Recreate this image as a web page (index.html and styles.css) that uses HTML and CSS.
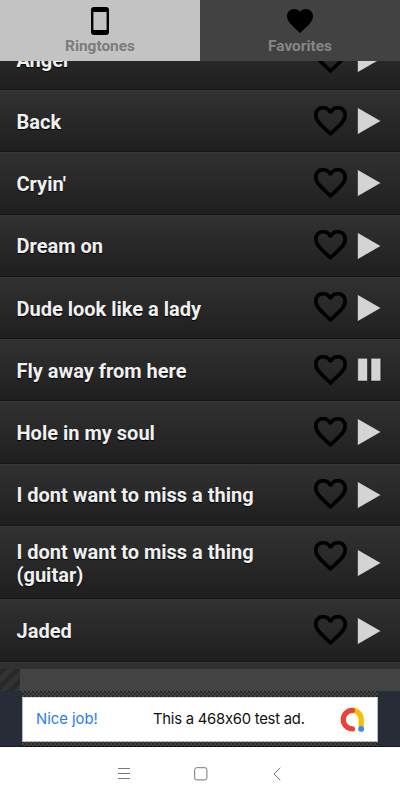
FILE: index.html
```html
<!DOCTYPE html>
<html lang="en">
<head>
<meta charset="utf-8">
<title>Ringtones</title>
<link rel="stylesheet" href="styles.css">
</head>
<body>
<svg class="defs" aria-hidden="true">
  <symbol id="heart" viewBox="2 3 20 18.35"><path d="M16.5 3c-1.74 0-3.41.81-4.5 2.09C10.91 3.81 9.24 3 7.5 3 4.42 3 2 5.42 2 8.5c0 3.78 3.4 6.86 8.55 11.54L12 21.35l1.45-1.32C18.6 15.36 22 12.28 22 8.5 22 5.42 19.58 3 16.5 3zm-4.4 15.55l-.1.1-.1-.1C7.14 14.24 4 11.39 4 8.5 4 6.5 5.5 5 7.5 5c1.54 0 3.04.99 3.57 2.36h1.87C13.46 5.99 14.96 5 16.5 5c2 0 3.5 1.5 3.5 3.5 0 2.89-3.14 5.74-7.9 10.05z"/></symbol>
  <symbol id="play" viewBox="0 0 26 30"><path d="M1.5 1.4V28.6L25 15z"/></symbol>
  <symbol id="pause" viewBox="0 0 26 30"><path d="M1.7 3.2h9.8v22.8H1.7zM15 3.2h9.8v22.8H15z"/></symbol>
</svg>
<div class="app">
  <nav class="tabs">
    <div class="tab active">
      <svg class="phone" viewBox="0 0 18 28"><path fill-rule="evenodd" d="M3 0h12a3 3 0 0 1 3 3v22a3 3 0 0 1-3 3H3a3 3 0 0 1-3-3V3a3 3 0 0 1 3-3zM2.4 5v18h13.2V5z"/></svg>
      <span>Ringtones</span>
    </div>
    <div class="tab">
      <svg class="fav" viewBox="2 3 20 18.35"><path d="M12 21.35l-1.45-1.32C5.4 15.36 2 12.28 2 8.5 2 5.42 4.42 3 7.5 3c1.74 0 3.41.81 4.5 2.09C13.09 3.81 14.76 3 16.5 3 19.58 3 22 5.42 22 8.5c0 3.78-3.4 6.86-8.55 11.54L12 21.35z"/></svg>
      <span>Favorites</span>
    </div>
  </nav>
  <main class="viewport">
    <ul class="list">
      <li><span class="name">Anger</span><svg class="heart"><use href="#heart"/></svg><svg class="ctl"><use href="#play"/></svg></li>
      <li><span class="name">Back</span><svg class="heart"><use href="#heart"/></svg><svg class="ctl"><use href="#play"/></svg></li>
      <li><span class="name">Cryin'</span><svg class="heart"><use href="#heart"/></svg><svg class="ctl"><use href="#play"/></svg></li>
      <li><span class="name">Dream on</span><svg class="heart"><use href="#heart"/></svg><svg class="ctl"><use href="#play"/></svg></li>
      <li><span class="name">Dude look like a lady</span><svg class="heart"><use href="#heart"/></svg><svg class="ctl"><use href="#play"/></svg></li>
      <li><span class="name">Fly away from here</span><svg class="heart"><use href="#heart"/></svg><svg class="ctl"><use href="#pause"/></svg></li>
      <li><span class="name">Hole in my soul</span><svg class="heart"><use href="#heart"/></svg><svg class="ctl"><use href="#play"/></svg></li>
      <li><span class="name">I dont want to miss a thing</span><svg class="heart"><use href="#heart"/></svg><svg class="ctl"><use href="#play"/></svg></li>
      <li class="tall"><span class="name">I dont want to miss a thing (guitar)</span><svg class="heart"><use href="#heart"/></svg><svg class="ctl"><use href="#play"/></svg></li>
      <li><span class="name">Jaded</span><svg class="heart"><use href="#heart"/></svg><svg class="ctl"><use href="#play"/></svg></li>
      <li></li>
    </ul>
  </main>
  <div class="progress"><div class="done"></div></div>
  <div class="ad-strip">
    <div class="ad-frame">
      <div class="ad">
        <span class="nice">Nice job!</span>
        <span class="msg">This a 468x60 test ad.</span>
        <svg class="admob" viewBox="0 0 24 24" fill="none" stroke-width="5">
          <path stroke="#fbbc04" d="M12 3.2A8.6 8.6 0 0 1 20.3 12v7.6"/>
          <path stroke="#ea4335" stroke-linecap="round" d="M12 3.2a8.9 8.9 0 0 0 0 17.8"/>
          <circle cx="20.3" cy="21" r="2.8" fill="#4285f4"/>
        </svg>
      </div>
    </div>
  </div>
  <footer class="sysnav">
    <svg viewBox="0 0 14 14"><path d="M1 1.5h12M1 6.5h12M1 11.5h12"/></svg>
    <svg viewBox="0 0 14 14"><rect x=".7" y=".7" width="12.2" height="12.2" rx="2"/></svg>
    <svg viewBox="0 0 14 14"><path d="M10.3.7L4 7l6.3 6.3"/></svg>
  </footer>
</div>
</body>
</html>
```
FILE: styles.css
```css
* { box-sizing: border-box; }
body { margin: 0; font-family: Roboto, sans-serif; background: #222; }
.defs { display: none; }
.app { display: flex; flex-direction: column; width: 400px; height: 800px; overflow: hidden; }

.tabs { display: flex; flex: 0 0 61px; }
.tab {
  flex: 1; display: flex; flex-direction: column; align-items: center;
  background: #424242; color: #868686;
  font-size: 15.4px; font-weight: 700; line-height: 18px;
}
.tab.active { background: #c3c3c3; color: #7c7c7c; }
.phone { width: 18px; height: 28px; margin: 6.5px 0 2.5px; }
.fav { width: 26px; height: 24px; margin: 8.5px 0 4.5px; }

.viewport { flex: 0 0 608px; overflow: hidden; background: #222; }
.list { list-style: none; margin: -33.2px 0 0; padding: 0; }
.list li {
  display: flex; align-items: flex-start;
  height: 62.25px; padding: 0 18.5px 0 16.5px;
  background: linear-gradient(#313131, #1f1f1f);
  border-top: 1px solid #363636; border-bottom: 1px solid #161616;
}
.list li.tall { height: 73.6px; }
.name {
  flex: 1; align-self: center; padding: 3px 50px 0 0;
  color: #f0f0f0; font-size: 20px; font-weight: 700; line-height: 23.5px;
  text-shadow: 0 1px 1px #000;
}
.heart { width: 33px; height: 30px; margin: 14.5px 9px 0 0; fill: #000; stroke: #000; stroke-width: .3; flex: none; }
.ctl { width: 26px; height: 30px; align-self: center; fill: #d4d4d4; stroke: #111; stroke-width: .5; flex: none; }

.progress { flex: 0 0 22px; background: #434343; }
.done { width: 20px; height: 22px; background: repeating-linear-gradient(135deg, #292929 0 5px, #333 5px 10px); }

.ad-strip { flex: 0 0 55px; padding: 0 22px; background: #272c36; border-bottom: 1px solid #15181f; }
.ad-frame { height: 55px; padding: 5.5px 0 4px; background: repeating-conic-gradient(#292929 0 25%, #454545 0 50%) 0 0 / 4px 4px; }
.ad { display: flex; align-items: center; height: 45.5px; padding: 0 13px; background: #fff; border: 1px solid #bbb; border-top-color: #ddd; font-family: Inter, sans-serif; font-size: 14.8px; font-feature-settings: "calt" 0; }
.nice { width: 117px; color: #2a7bf0; }
.msg { flex: 1; color: #111; white-space: nowrap; letter-spacing: -.23px; }
.admob { width: 25px; height: 25px; margin-right: -1px; }

.sysnav { flex: 1; display: flex; justify-content: center; align-items: center; gap: 62.5px; padding-left: 1px; background: #fff; }
.sysnav svg { width: 14px; height: 14px; fill: none; stroke: #777; stroke-width: 1; }
```
